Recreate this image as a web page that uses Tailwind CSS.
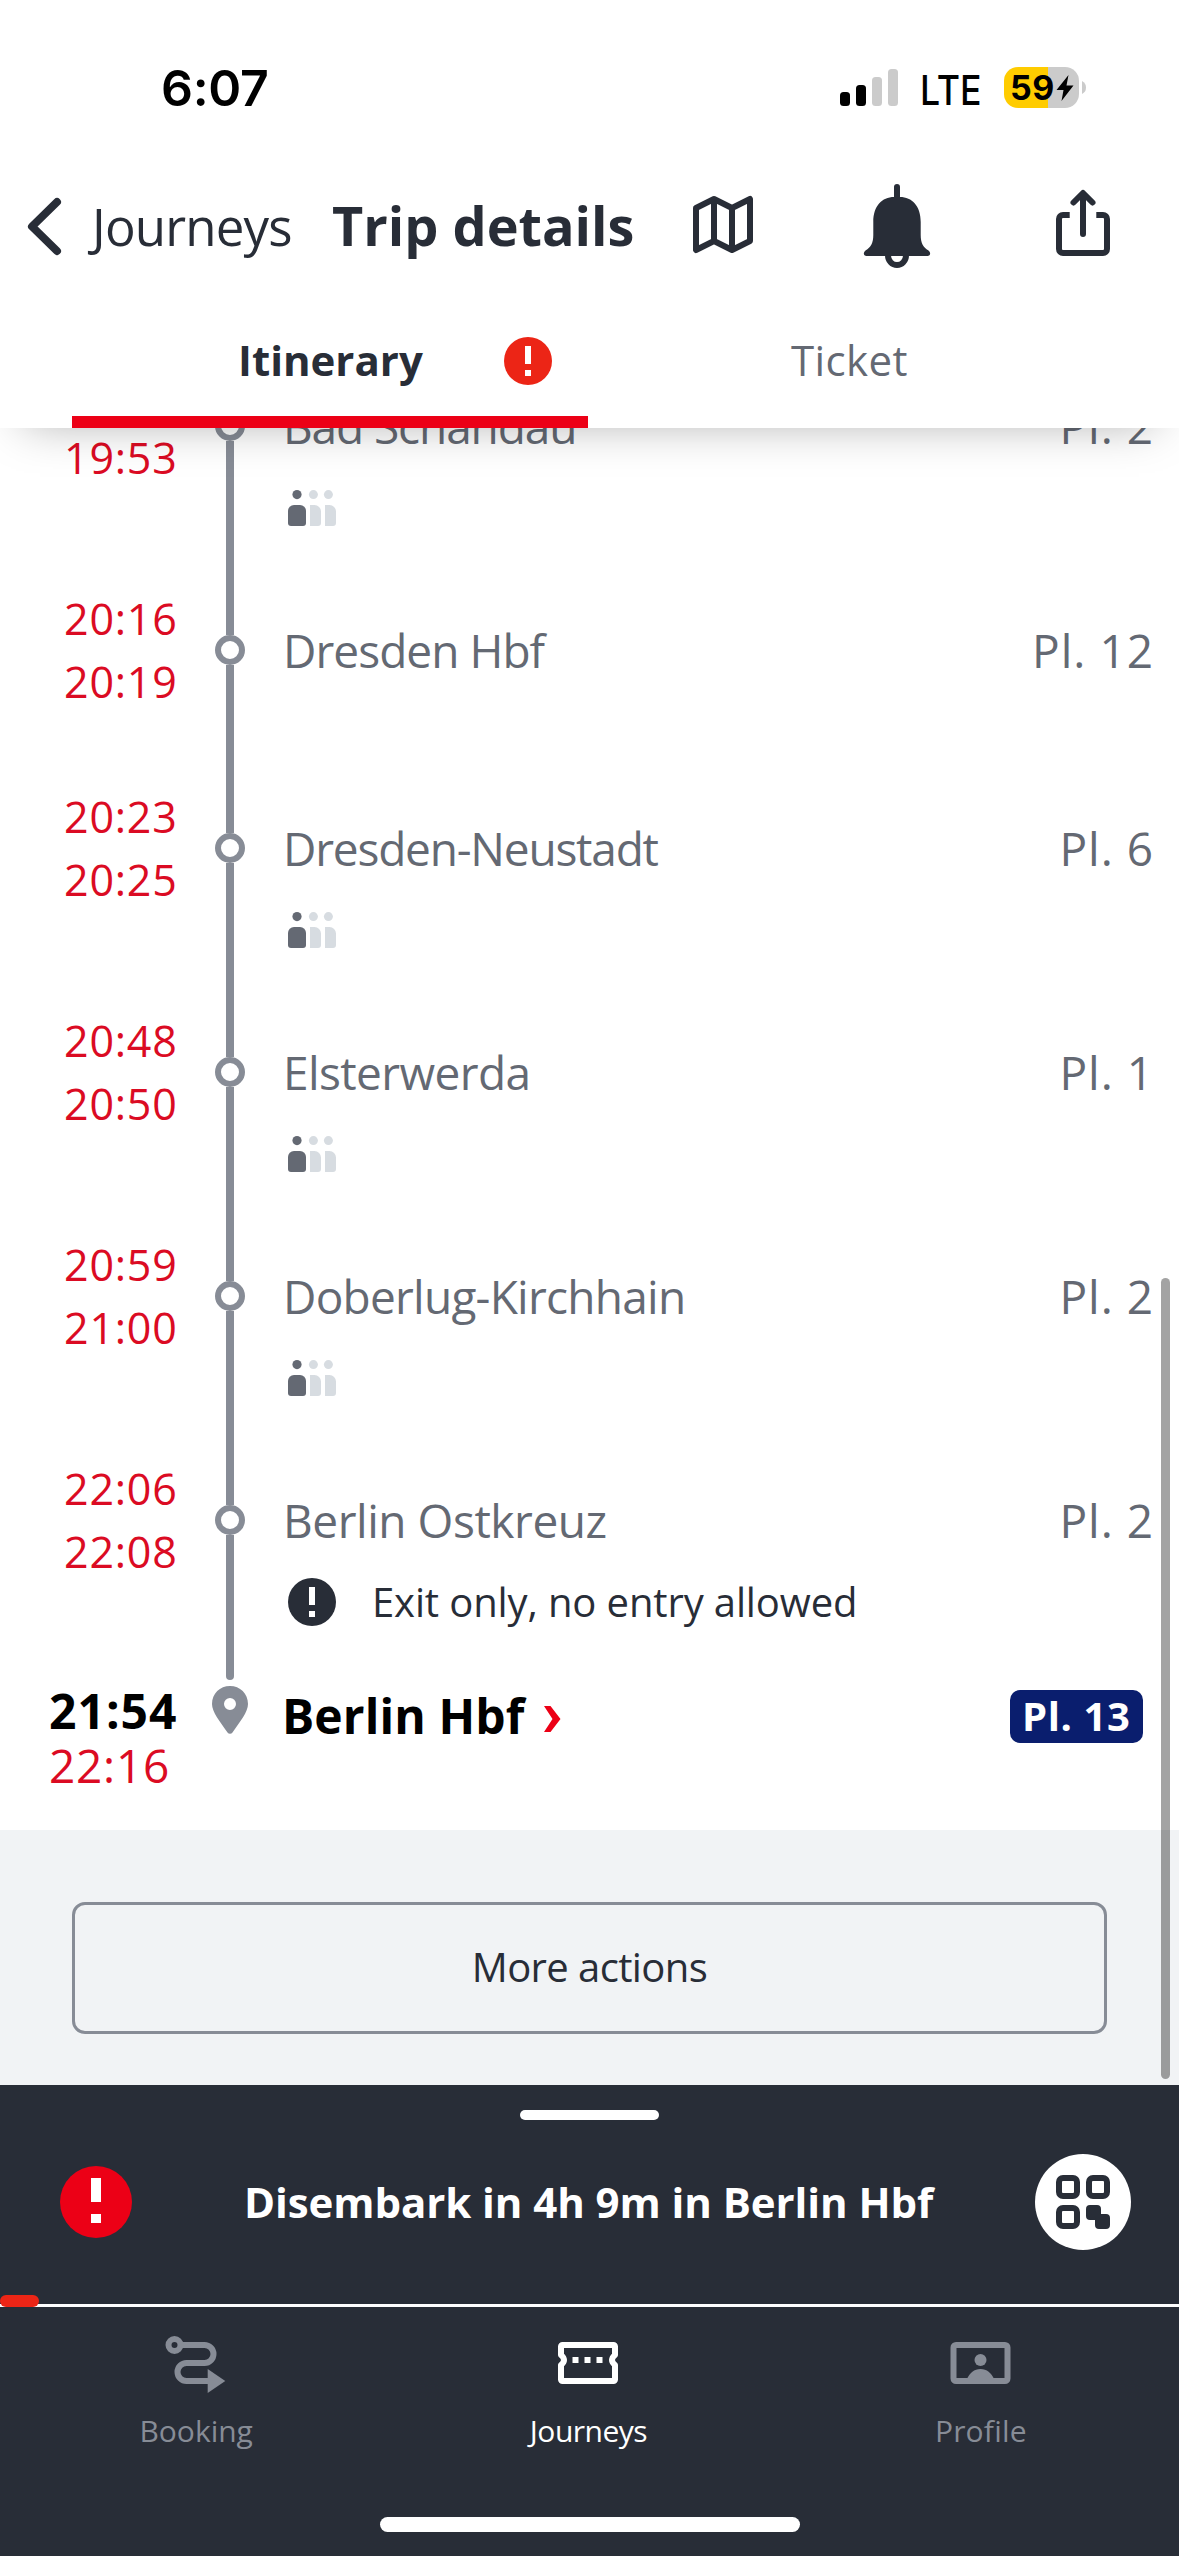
<!DOCTYPE html>
<html lang="en">
<head>
<meta charset="utf-8">
<title>Trip details</title>
<script src="https://cdn.jsdelivr.net/npm/@tailwindcss/browser@4"></script>
</head>
<body class="bg-white">
<svg class="hidden">
  <symbol id="occupancy" viewBox="0 0 48 36">
    <g fill="#646973"><circle cx="9" cy="4.6" r="4.6"/><path d="M0 21a6 6 0 0 1 6-6h6a6 6 0 0 1 6 6v12a3 3 0 0 1-3 3H3a3 3 0 0 1-3-3z"/></g>
    <g fill="#d7dce1"><circle cx="25.4" cy="4.6" r="4.5"/><circle cx="40.4" cy="4.6" r="4.5"/>
    <path d="M22 15h4.500a6.500 6.500 0 0 1 6.500 6.500V33a3 3 0 0 1-3 3h-8zM37 15h4.500a6.500 6.500 0 0 1 6.500 6.500V33a3 3 0 0 1-3 3h-8z"/></g>
  </symbol>
  <symbol id="alert" viewBox="0 0 48 48">
    <circle cx="24" cy="24" r="24" fill="currentColor"/><path d="M21 9h6v18h-6zM21 33h6v6h-6z" fill="#fff"/>
  </symbol>
</svg>

<div class="relative flex h-[2556px] w-[1179px] flex-col overflow-hidden bg-white font-['Open_Sans',sans-serif] text-[#282d37]">

  <header class="relative z-10 h-[428px] shrink-0 bg-white shadow-[0_18px_45px_-24px_rgba(0,0,0,0.34)]">
    <!-- status bar -->
    <div class="flex h-[174px] items-start pl-[161px] font-['Inter',sans-serif] text-black">
      <span class="mt-[58px] w-[109px] text-[50px] leading-[60px] font-semibold tracking-[-0.3px]">6:07</span>
      <svg class="mt-[69px] ml-[570px] h-[37px] w-[58px]" viewBox="0 0 58 37">
        <rect x="0" y="23" width="10" height="14" rx="3.500"/><rect x="16" y="16" width="10" height="21" rx="3.500"/>
        <rect x="32" y="8" width="10" height="29" rx="3.500" fill="#cbcbcb"/><rect x="48" y="0" width="10" height="37" rx="3.500" fill="#cbcbcb"/>
      </svg>
      <span class="mt-[60px] ml-[22px] w-[84px] origin-left scale-x-[0.87] text-[41px] leading-[60px] font-medium">LTE</span>
      <div class="mt-[67px] flex h-[41px] w-[75px] items-center overflow-hidden rounded-[14px] bg-[linear-gradient(90deg,#ffcc00_44px,#cbcbcb_44px)] pl-[6px]">
        <span class="w-[46px] text-[34px] leading-[41px] font-bold tracking-[0.5px]">59</span>
        <svg class="h-[26px] w-[18px]" viewBox="0 0 18 26"><path d="M12.500 0 0.500 15h7L5.500 26 17.500 10.500h-7z"/></svg>
      </div>
      <svg class="mt-[81px] ml-[3px] h-[13px] w-[4px]" viewBox="0 0 4 13"><path d="M0 0q4 2 4 6.500T0 13z" fill="#cbcbcb"/></svg>
    </div>

    <!-- navigation -->
    <div class="flex h-[104px] items-center">
      <svg class="h-[104px] w-[92px]" viewBox="0 174 92 104" fill="none" stroke="#282d37" stroke-width="8" stroke-linecap="round" stroke-linejoin="round"><path d="M57 202 32 226.500 57 251"/></svg>
      <span class="w-[240px] pb-[1px] text-[51px] leading-[70px] tracking-[-0.8px]">Journeys</span>
      <h1 class="w-[348px] pb-[3px] text-[54px] leading-[70px] font-bold whitespace-nowrap">Trip details</h1>
      <svg class="h-[104px] w-[120px]" viewBox="680 174 120 104" fill="none" stroke="#282d37" stroke-width="6" stroke-linejoin="round"><path d="M696 208 714 199 732 208 750 199V241L732 250 714 241 696 250zM714 199V241M732 208V250"/></svg>
      <svg class="h-[104px] w-[190px]" viewBox="800 174 190 104" fill="#282d37"><path d="M894 197V187a3 3 0 0 1 6 0V197C912 197 920.700 206 920.700 222V235C920.700 243 923 247 928.500 250.500 931.500 253 930 256 927.500 256H866.500C864 256 862.500 253 865.500 250.500 871 247 873.300 243 873.300 235V222C873.300 206 882 197 894 197z"/><path d="M888 255.500a9 9.500 0 0 0 18 0" fill="none" stroke="#282d37" stroke-width="6"/></svg>
      <svg class="h-[104px] w-[189px]" viewBox="990 174 189 104" fill="none" stroke="#282d37" stroke-width="6"><path d="M1069.700 215H1063a4 4 0 0 0-4 4V249a4 4 0 0 0 4 4H1103a4 4 0 0 0 4-4V219a4 4 0 0 0-4-4H1096.300"/><path d="M1083 234V194M1073.500 202.500 1083 193 1092.500 202.500" stroke-linecap="round" stroke-linejoin="round"/></svg>
    </div>

    <!-- tabs -->
    <div class="flex h-[150px] pl-[72px] text-[42px] leading-[60px]">
      <div class="flex w-[516px] items-center border-b-[12px] border-[#ec0016] pt-[28px] pl-[166px]">
        <span class="w-[266px] pb-[2px] font-bold">Itinerary</span>
        <svg class="size-[48px] text-[#ec2516]"><use href="#alert"/></svg>
      </div>
      <div class="mb-[12px] flex items-center pt-[28px] pl-[203px] text-[#646973]"><span class="pb-[2px] tracking-[0.4px]">Ticket</span></div>
    </div>
  </header>

  <!-- stops -->
  <main class="-mt-[66px] flex shrink-0 flex-col">
    <section class="flex h-[224px]">
      <div class="w-[212px] pt-[1px] pl-[64px] text-[43px] leading-[63px] tracking-[0.8px] text-[#db0b23]"><div>19:51</div><div>19:53</div></div>
      <div class="flex w-[71px] flex-col items-start"><i class="ml-[14px] h-[49px] w-[8px] bg-[#878c96]"></i><i class="ml-[3px] size-[30px] rounded-full border-6 border-[#878c96] bg-white"></i><i class="ml-[14px] w-[8px] flex-1 bg-[#878c96]"></i></div>
      <div class="flex-1 pt-[34px] text-[46px] leading-[60px] text-[#646973]"><div class="flex justify-between pr-[25px]"><span class="tracking-[-1.1px]">Bad Schandau</span><span class="tracking-[1px]">Pl. 2</span></div><svg class="mt-[34px] ml-[5px] h-[36px] w-[48px]"><use href="#occupancy"/></svg></div>
    </section>
    <section class="flex h-[198px]">
      <div class="w-[212px] pt-[1px] pl-[64px] text-[43px] leading-[63px] tracking-[0.8px] text-[#db0b23]"><div>20:16</div><div>20:19</div></div>
      <div class="flex w-[71px] flex-col items-start"><i class="ml-[14px] h-[49px] w-[8px] bg-[#878c96]"></i><i class="ml-[3px] size-[30px] rounded-full border-6 border-[#878c96]"></i><i class="ml-[14px] w-[8px] flex-1 bg-[#878c96]"></i></div>
      <div class="flex-1 pt-[34px] text-[46px] leading-[60px] text-[#646973]"><div class="flex justify-between pr-[25px]"><span class="tracking-[-0.95px]">Dresden Hbf</span><span class="tracking-[1px]">Pl. 12</span></div></div>
    </section>
    <section class="flex h-[224px]">
      <div class="w-[212px] pt-[1px] pl-[64px] text-[43px] leading-[63px] tracking-[0.8px] text-[#db0b23]"><div>20:23</div><div>20:25</div></div>
      <div class="flex w-[71px] flex-col items-start"><i class="ml-[14px] h-[49px] w-[8px] bg-[#878c96]"></i><i class="ml-[3px] size-[30px] rounded-full border-6 border-[#878c96]"></i><i class="ml-[14px] w-[8px] flex-1 bg-[#878c96]"></i></div>
      <div class="flex-1 pt-[34px] text-[46px] leading-[60px] text-[#646973]"><div class="flex justify-between pr-[25px]"><span class="tracking-[-1.2px]">Dresden-Neustadt</span><span class="tracking-[1px]">Pl. 6</span></div><svg class="mt-[34px] ml-[5px] h-[36px] w-[48px]"><use href="#occupancy"/></svg></div>
    </section>
    <section class="flex h-[224px]">
      <div class="w-[212px] pt-[1px] pl-[64px] text-[43px] leading-[63px] tracking-[0.8px] text-[#db0b23]"><div>20:48</div><div>20:50</div></div>
      <div class="flex w-[71px] flex-col items-start"><i class="ml-[14px] h-[49px] w-[8px] bg-[#878c96]"></i><i class="ml-[3px] size-[30px] rounded-full border-6 border-[#878c96]"></i><i class="ml-[14px] w-[8px] flex-1 bg-[#878c96]"></i></div>
      <div class="flex-1 pt-[34px] text-[46px] leading-[60px] text-[#646973]"><div class="flex justify-between pr-[25px]"><span class="tracking-[-0.6px]">Elsterwerda</span><span class="tracking-[1px]">Pl. 1</span></div><svg class="mt-[34px] ml-[5px] h-[36px] w-[48px]"><use href="#occupancy"/></svg></div>
    </section>
    <section class="flex h-[224px]">
      <div class="w-[212px] pt-[1px] pl-[64px] text-[43px] leading-[63px] tracking-[0.8px] text-[#db0b23]"><div>20:59</div><div>21:00</div></div>
      <div class="flex w-[71px] flex-col items-start"><i class="ml-[14px] h-[49px] w-[8px] bg-[#878c96]"></i><i class="ml-[3px] size-[30px] rounded-full border-6 border-[#878c96]"></i><i class="ml-[14px] w-[8px] flex-1 bg-[#878c96]"></i></div>
      <div class="flex-1 pt-[34px] text-[46px] leading-[60px] text-[#646973]"><div class="flex justify-between pr-[25px]"><span class="tracking-[-0.75px]">Doberlug-Kirchhain</span><span class="tracking-[1px]">Pl. 2</span></div><svg class="mt-[34px] ml-[5px] h-[36px] w-[48px]"><use href="#occupancy"/></svg></div>
    </section>
    <section class="flex h-[224px]">
      <div class="w-[212px] pt-[1px] pl-[64px] text-[43px] leading-[63px] tracking-[0.8px] text-[#db0b23]"><div>22:06</div><div>22:08</div></div>
      <div class="flex w-[71px] flex-col items-start"><i class="ml-[14px] h-[49px] w-[8px] bg-[#878c96]"></i><i class="ml-[3px] size-[30px] rounded-full border-6 border-[#878c96]"></i><i class="ml-[14px] w-[8px] flex-1 rounded-b-[4px] bg-[#878c96]"></i></div>
      <div class="flex-1 pt-[34px] text-[46px] leading-[60px] text-[#646973]"><div class="flex justify-between pr-[25px]"><span class="tracking-[-0.45px]">Berlin Ostkreuz</span><span class="tracking-[1px]">Pl. 2</span></div>
        <div class="mt-[28px] ml-[5px] flex h-[48px] items-center gap-[36px] text-[#282d37]"><svg class="size-[48px]"><use href="#alert"/></svg><span class="pb-[1px] text-[40px] leading-[45px] tracking-[-0.13px]">Exit only, no entry allowed</span></div>
      </div>
    </section>

    <!-- destination -->
    <section class="flex h-[150px] items-start text-black">
      <div class="w-[212px] pt-[3px] pl-[49px]"><div class="text-[48px] leading-[55px] font-bold tracking-[1px]">21:54</div><div class="text-[46px] leading-[55px] tracking-[0.75px] text-[#db0b23]">22:16</div></div>
      <svg class="mt-[6px] mr-[34px] h-[48px] w-[36px]" viewBox="0 0 36 48"><path fill="#878c96" fill-rule="evenodd" d="M18 0c10 0 18 7.500 18 18 0 8-8 17.500-15.500 28.500a3 3 0 0 1-5 0C8 35.500 0 26 0 18 0 7.500 8 0 18 0zm0 12a6 6 0 1 0 0 12 6 6 0 0 0 0-12z"/></svg>
      <span class="mt-[6px] w-[262px] text-[48px] leading-[60px] font-bold tracking-[0.1px] whitespace-nowrap">Berlin Hbf</span>
      <svg class="mt-[26px] h-[26px] w-[17px]" viewBox="0 0 17 26"><path fill="#ec0016" d="M0 0H6.500L16.500 13 6.500 26H0L8.500 13z"/></svg>
      <span class="mt-[10px] mr-[36px] ml-auto h-[53px] w-[133px] rounded-[10px] bg-[#0a1e6e] pl-[12px] text-[40px] leading-[51px] font-bold tracking-[0.6px] text-white">Pl. 13</span>
    </section>
  </main>

  <section class="h-[255px] shrink-0 bg-[#f1f3f5] px-[72px] pt-[72px]">
    <button class="block h-[132px] w-full rounded-[13px] border-3 border-[#878c96] pb-[2px] text-[40px] tracking-[-0.6px]">More actions</button>
  </section>

  <i class="absolute top-[1278px] left-[1161px] h-[801px] w-[9px] rounded-full bg-black/36"></i>

  <!-- live trip panel -->
  <section class="relative flex h-[222px] shrink-0 flex-col items-center border-b-3 border-white bg-[#282d37] pt-[25px]">
    <i class="h-[10px] w-[139px] rounded-full bg-white"></i>
    <div class="flex h-[164px] w-full items-center pr-[48px] pl-[60px] text-white">
      <svg class="mr-[112px] size-[72px]" viewBox="0 0 72 72"><circle cx="36" cy="36" r="36" fill="#ec0016"/><path d="M31 12h10v24H31zM31 48h10v9H31z" fill="#fff"/></svg>
      <span class="text-[42px] leading-[60px] font-bold tracking-[-0.07px] whitespace-nowrap">Disembark in 4h 9m in Berlin Hbf</span>
      <svg class="ml-auto size-[96px]" viewBox="0 0 96 96"><circle cx="48" cy="48" r="48" fill="#fff"/><g fill="none" stroke="#282d37" stroke-width="6"><rect x="24" y="24" width="18" height="18" rx="4"/><rect x="54" y="24" width="18" height="18" rx="4"/><rect x="24" y="54" width="18" height="18" rx="4"/></g><path fill="#282d37" d="M55 51h7a4 4 0 0 1 4 4v5h5a4 4 0 0 1 4 4v7a4 4 0 0 1-4 4h-7a4 4 0 0 1-4-4v-5h-5a4 4 0 0 1-4-4v-7a4 4 0 0 1 4-4z"/></svg>
    </div>
    <i class="absolute -bottom-[3px] left-0 h-[12px] w-[39px] rounded-full bg-[#ec2516]"></i>
  </section>

  <!-- bottom navigation -->
  <nav class="flex h-[249px] shrink-0 flex-col items-center bg-[#282d37] pt-[21px] text-[30px] leading-[40px] text-[#878c96]">
    <div class="grid w-full grid-cols-3 pr-[2px]">
      <a class="flex flex-col items-center gap-[11px]">
        <svg class="size-[72px]" viewBox="0 0 72 72" fill="none" stroke="currentColor" stroke-width="6"><circle cx="14.500" cy="17" r="6"/><path d="M20 17H44.500a9 9 0 0 1 0 18H26.500a9 9 0 0 0 0 18H49"/><path d="M47.700 41 65.300 53 47.700 65z" fill="currentColor" stroke="none"/></svg>
        <span>Booking</span></a>
      <a class="flex flex-col items-center gap-[11px] text-white">
        <svg class="size-[72px]" viewBox="0 0 72 72" fill="none" stroke="currentColor" stroke-width="6" stroke-linejoin="round"><path d="M11 17H61.500a1.500 1.500 0 0 1 1.500 1.500V27q-6 5 0 10V51.500a1.500 1.500 0 0 1-1.500 1.500H10.500a1.500 1.500 0 0 1-1.500-1.500V37q6-5 0-10V18.500a1.500 1.500 0 0 1 1.500-1.500z"/><path fill="currentColor" stroke="none" d="M20.500 29h6v6h-6zM32.500 29h6v6h-6zM44.500 29h6v6h-6z"/></svg>
        <span class="tracking-[-0.5px]">Journeys</span></a>
      <a class="flex flex-col items-center gap-[11px]">
        <svg class="size-[72px]" viewBox="0 0 72 72"><rect x="8.500" y="17" width="54" height="36" rx="2.500" fill="none" stroke="currentColor" stroke-width="6"/><circle cx="35.500" cy="32" r="6" fill="currentColor"/><path fill="currentColor" d="M21.500 52C25 44.500 29 41 35.500 41S46 44.500 49.500 52z"/></svg>
        <span class="tracking-[0.2px]">Profile</span></a>
    </div>
    <i class="mt-[66px] h-[15px] w-[420px] rounded-full bg-white"></i>
  </nav>
</div>
</body>
</html>
